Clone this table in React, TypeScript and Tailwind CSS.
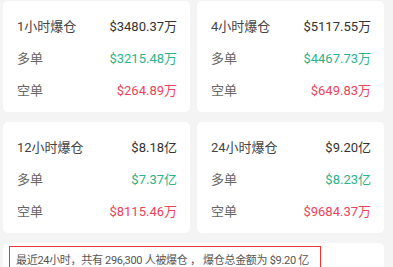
import React from "react";

type Row = { label: string; value: string; tone: "main" | "long" | "short" };

const cards: Row[][] = [
  [
    { label: "1小时爆仓", value: "$3480.37万", tone: "main" },
    { label: "多单", value: "$3215.48万", tone: "long" },
    { label: "空单", value: "$264.89万", tone: "short" },
  ],
  [
    { label: "4小时爆仓", value: "$5117.55万", tone: "main" },
    { label: "多单", value: "$4467.73万", tone: "long" },
    { label: "空单", value: "$649.83万", tone: "short" },
  ],
  [
    { label: "12小时爆仓", value: "$8.18亿", tone: "main" },
    { label: "多单", value: "$7.37亿", tone: "long" },
    { label: "空单", value: "$8115.46万", tone: "short" },
  ],
  [
    { label: "24小时爆仓", value: "$9.20亿", tone: "main" },
    { label: "多单", value: "$8.23亿", tone: "long" },
    { label: "空单", value: "$9684.37万", tone: "short" },
  ],
];

const toneClass = {
  main: "text-[#333333]",
  long: "text-[#2bb38a]",
  short: "text-[#e8455a]",
};

const StatCard = ({ rows }: { rows: Row[] }) => {
  return (
    <div className="bg-white rounded-[5px] pt-[16px] pb-[11px] pl-[14px] pr-[13px] flex flex-col gap-[12px]">
      {rows.map((r, i) => (
        <div key={i} className="h-[20px] flex items-center justify-between text-[13px]">
          <span className={i === 0 ? "text-[#444444]" : "text-[#666666]"}>{r.label}</span>
          <span className={toneClass[r.tone]}>{r.value}</span>
        </div>
      ))}
    </div>
  );
};

export default function App() {
  return (
    <div
      className="w-[393px] h-[267px] overflow-hidden bg-[#f4f4f4] pt-[1px] pl-[3px]"
      style={{ fontFamily: '"Roboto", "Noto Sans CJK SC", sans-serif' }}
    >
      <div className="w-[381px] grid grid-cols-2 gap-x-[7px] gap-y-[10px]">
        {cards.map((rows, i) => (
          <StatCard key={i} rows={rows} />
        ))}
      </div>
      <div className="w-[381px] mt-[10px] bg-white rounded-[5px] pt-[3px] pl-[6px] h-[40px]">
        <div className="w-[312px] border-[1.5px] border-[#e53935] pl-[6px] pt-[6px] h-[40px] text-[11px] leading-[16px] tracking-[-0.3px] text-[#555555] whitespace-nowrap">
          最近24小时，共有 296,300 人被爆仓 ， 爆仓总金额为 $9.20 亿
        </div>
      </div>
    </div>
  );
}
